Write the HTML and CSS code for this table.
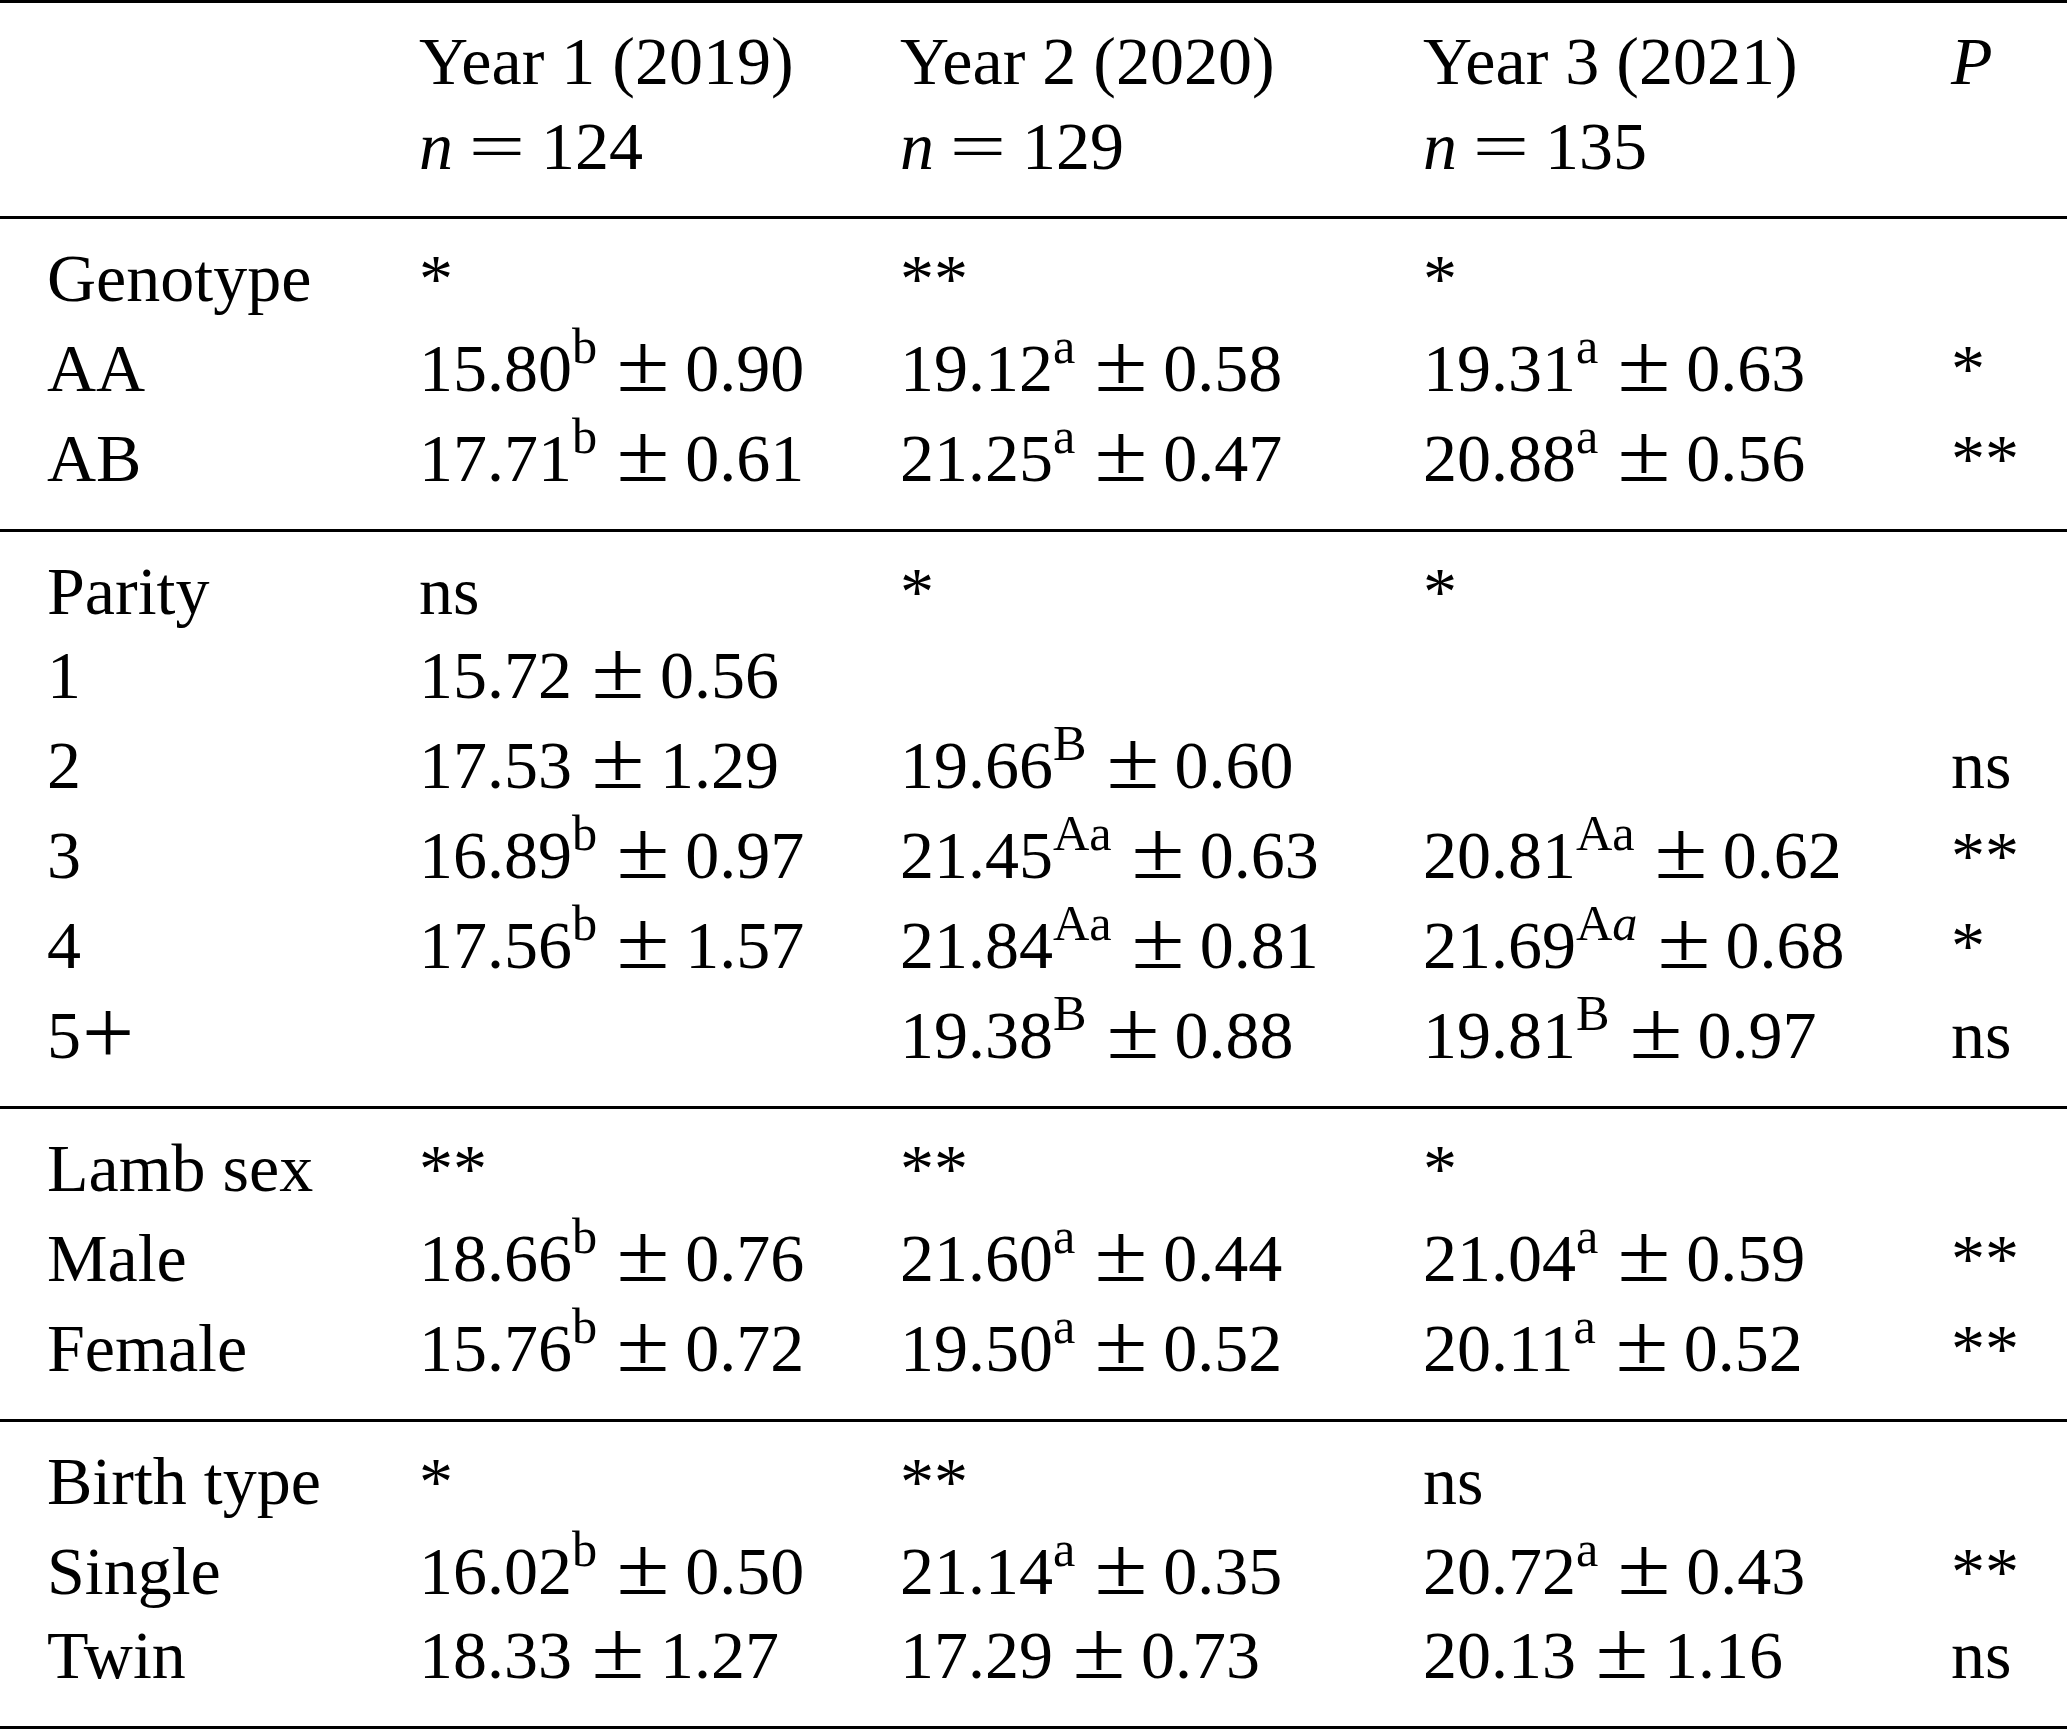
FILE: index.html
```html
<!DOCTYPE html>
<html lang="en">
<head>
<meta charset="utf-8">
<title>Table</title>
<link rel="stylesheet" href="styles.css">
</head>
<body>
<div class="tbl">
  <div class="rule"></div>
  <div class="head">
    <div class="row hrow">
      <div></div>
      <div>Year 1 (2019)<br><i>n</i><span class="eq">=</span>124</div>
      <div>Year 2 (2020)<br><i>n</i><span class="eq">=</span>129</div>
      <div>Year 3 (2021)<br><i>n</i><span class="eq">=</span>135</div>
      <div><i>P</i></div>
    </div>
  </div>
  <div class="rule"></div>
  <div class="sec">
    <div class="row"><div>Genotype</div><div>*</div><div>**</div><div>*</div><div></div></div>
    <div class="row s"><div>AA</div><div>15.80<sup>b</sup><span class="pm">±</span>0.90</div><div>19.12<sup>a</sup><span class="pm">±</span>0.58</div><div>19.31<sup>a</sup><span class="pm">±</span>0.63</div><div>*</div></div>
    <div class="row s"><div>AB</div><div>17.71<sup>b</sup><span class="pm">±</span>0.61</div><div>21.25<sup>a</sup><span class="pm">±</span>0.47</div><div>20.88<sup>a</sup><span class="pm">±</span>0.56</div><div>**</div></div>
  </div>
  <div class="rule"></div>
  <div class="sec">
    <div class="row"><div>Parity</div><div>ns</div><div>*</div><div>*</div><div></div></div>
    <div class="row"><div>1</div><div>15.72<span class="pm">±</span>0.56</div><div></div><div></div><div></div></div>
    <div class="row s"><div>2</div><div>17.53<span class="pm">±</span>1.29</div><div>19.66<sup>B</sup><span class="pm">±</span>0.60</div><div></div><div>ns</div></div>
    <div class="row s"><div>3</div><div>16.89<sup>b</sup><span class="pm">±</span>0.97</div><div>21.45<sup>Aa</sup><span class="pm">±</span>0.63</div><div>20.81<sup>Aa</sup><span class="pm">±</span>0.62</div><div>**</div></div>
    <div class="row s"><div>4</div><div>17.56<sup>b</sup><span class="pm">±</span>1.57</div><div>21.84<sup>Aa</sup><span class="pm">±</span>0.81</div><div>21.69<sup>A<i>a</i></sup><span class="pm">±</span>0.68</div><div>*</div></div>
    <div class="row s"><div>5<span class="plus">+</span></div><div></div><div>19.38<sup>B</sup><span class="pm">±</span>0.88</div><div>19.81<sup>B</sup><span class="pm">±</span>0.97</div><div>ns</div></div>
  </div>
  <div class="rule"></div>
  <div class="sec">
    <div class="row"><div>Lamb sex</div><div>**</div><div>**</div><div>*</div><div></div></div>
    <div class="row s"><div>Male</div><div>18.66<sup>b</sup><span class="pm">±</span>0.76</div><div>21.60<sup>a</sup><span class="pm">±</span>0.44</div><div>21.04<sup>a</sup><span class="pm">±</span>0.59</div><div>**</div></div>
    <div class="row s"><div>Female</div><div>15.76<sup>b</sup><span class="pm">±</span>0.72</div><div>19.50<sup>a</sup><span class="pm">±</span>0.52</div><div>20.11<sup>a</sup><span class="pm">±</span>0.52</div><div>**</div></div>
  </div>
  <div class="rule"></div>
  <div class="sec">
    <div class="row"><div>Birth type</div><div>*</div><div>**</div><div>ns</div><div></div></div>
    <div class="row s"><div>Single</div><div>16.02<sup>b</sup><span class="pm">±</span>0.50</div><div>21.14<sup>a</sup><span class="pm">±</span>0.35</div><div>20.72<sup>a</sup><span class="pm">±</span>0.43</div><div>**</div></div>
    <div class="row"><div>Twin</div><div>18.33<span class="pm">±</span>1.27</div><div>17.29<span class="pm">±</span>0.73</div><div>20.13<span class="pm">±</span>1.16</div><div>ns</div></div>
  </div>
  <div class="rule"></div>
</div>
</body>
</html>
```

FILE: styles.css
```css
html, body {
  margin: 0;
  padding: 0;
  background: #fff;
  overflow: hidden;
}

body {
  font-family: "Liberation Serif", "Times New Roman", serif;
  font-size: 68px;
  color: #000;
}

.tbl {
  width: 2067px;
}

.rule {
  height: 3px;
  background: #000;
}

.head {
  padding: 16px 0 27px;
}

.sec {
  padding: 17px 0 29px;
}

.row {
  display: grid;
  grid-template-columns: 372px 481px 523px 528px 1fr;
  padding-left: 47px;
  height: 84px;
  line-height: 84px;
  white-space: nowrap;
}

.row.s {
  padding-top: 6px;
}

.hrow {
  height: 170px;
  line-height: 85px;
}

sup {
  font-size: 0.74em;
  line-height: 0;
  vertical-align: 28px;
}

.pm {
  display: inline-block;
  width: 56px;
  margin: 0 14px 0 18px;
  text-align: center;
  line-height: 68px;
  transform: scale(1.42, 1.22);
  transform-origin: 50% 84%;
}

.eq {
  display: inline-block;
  width: 52px;
  margin: 0 18px;
  text-align: center;
  line-height: 68px;
  transform: scaleX(1.48);
}

.plus {
  display: inline-block;
  width: 48px;
  margin-left: 3px;
  text-align: center;
  line-height: 68px;
  transform: scale(1.36);
  transform-origin: 50% 59%;
}
```
